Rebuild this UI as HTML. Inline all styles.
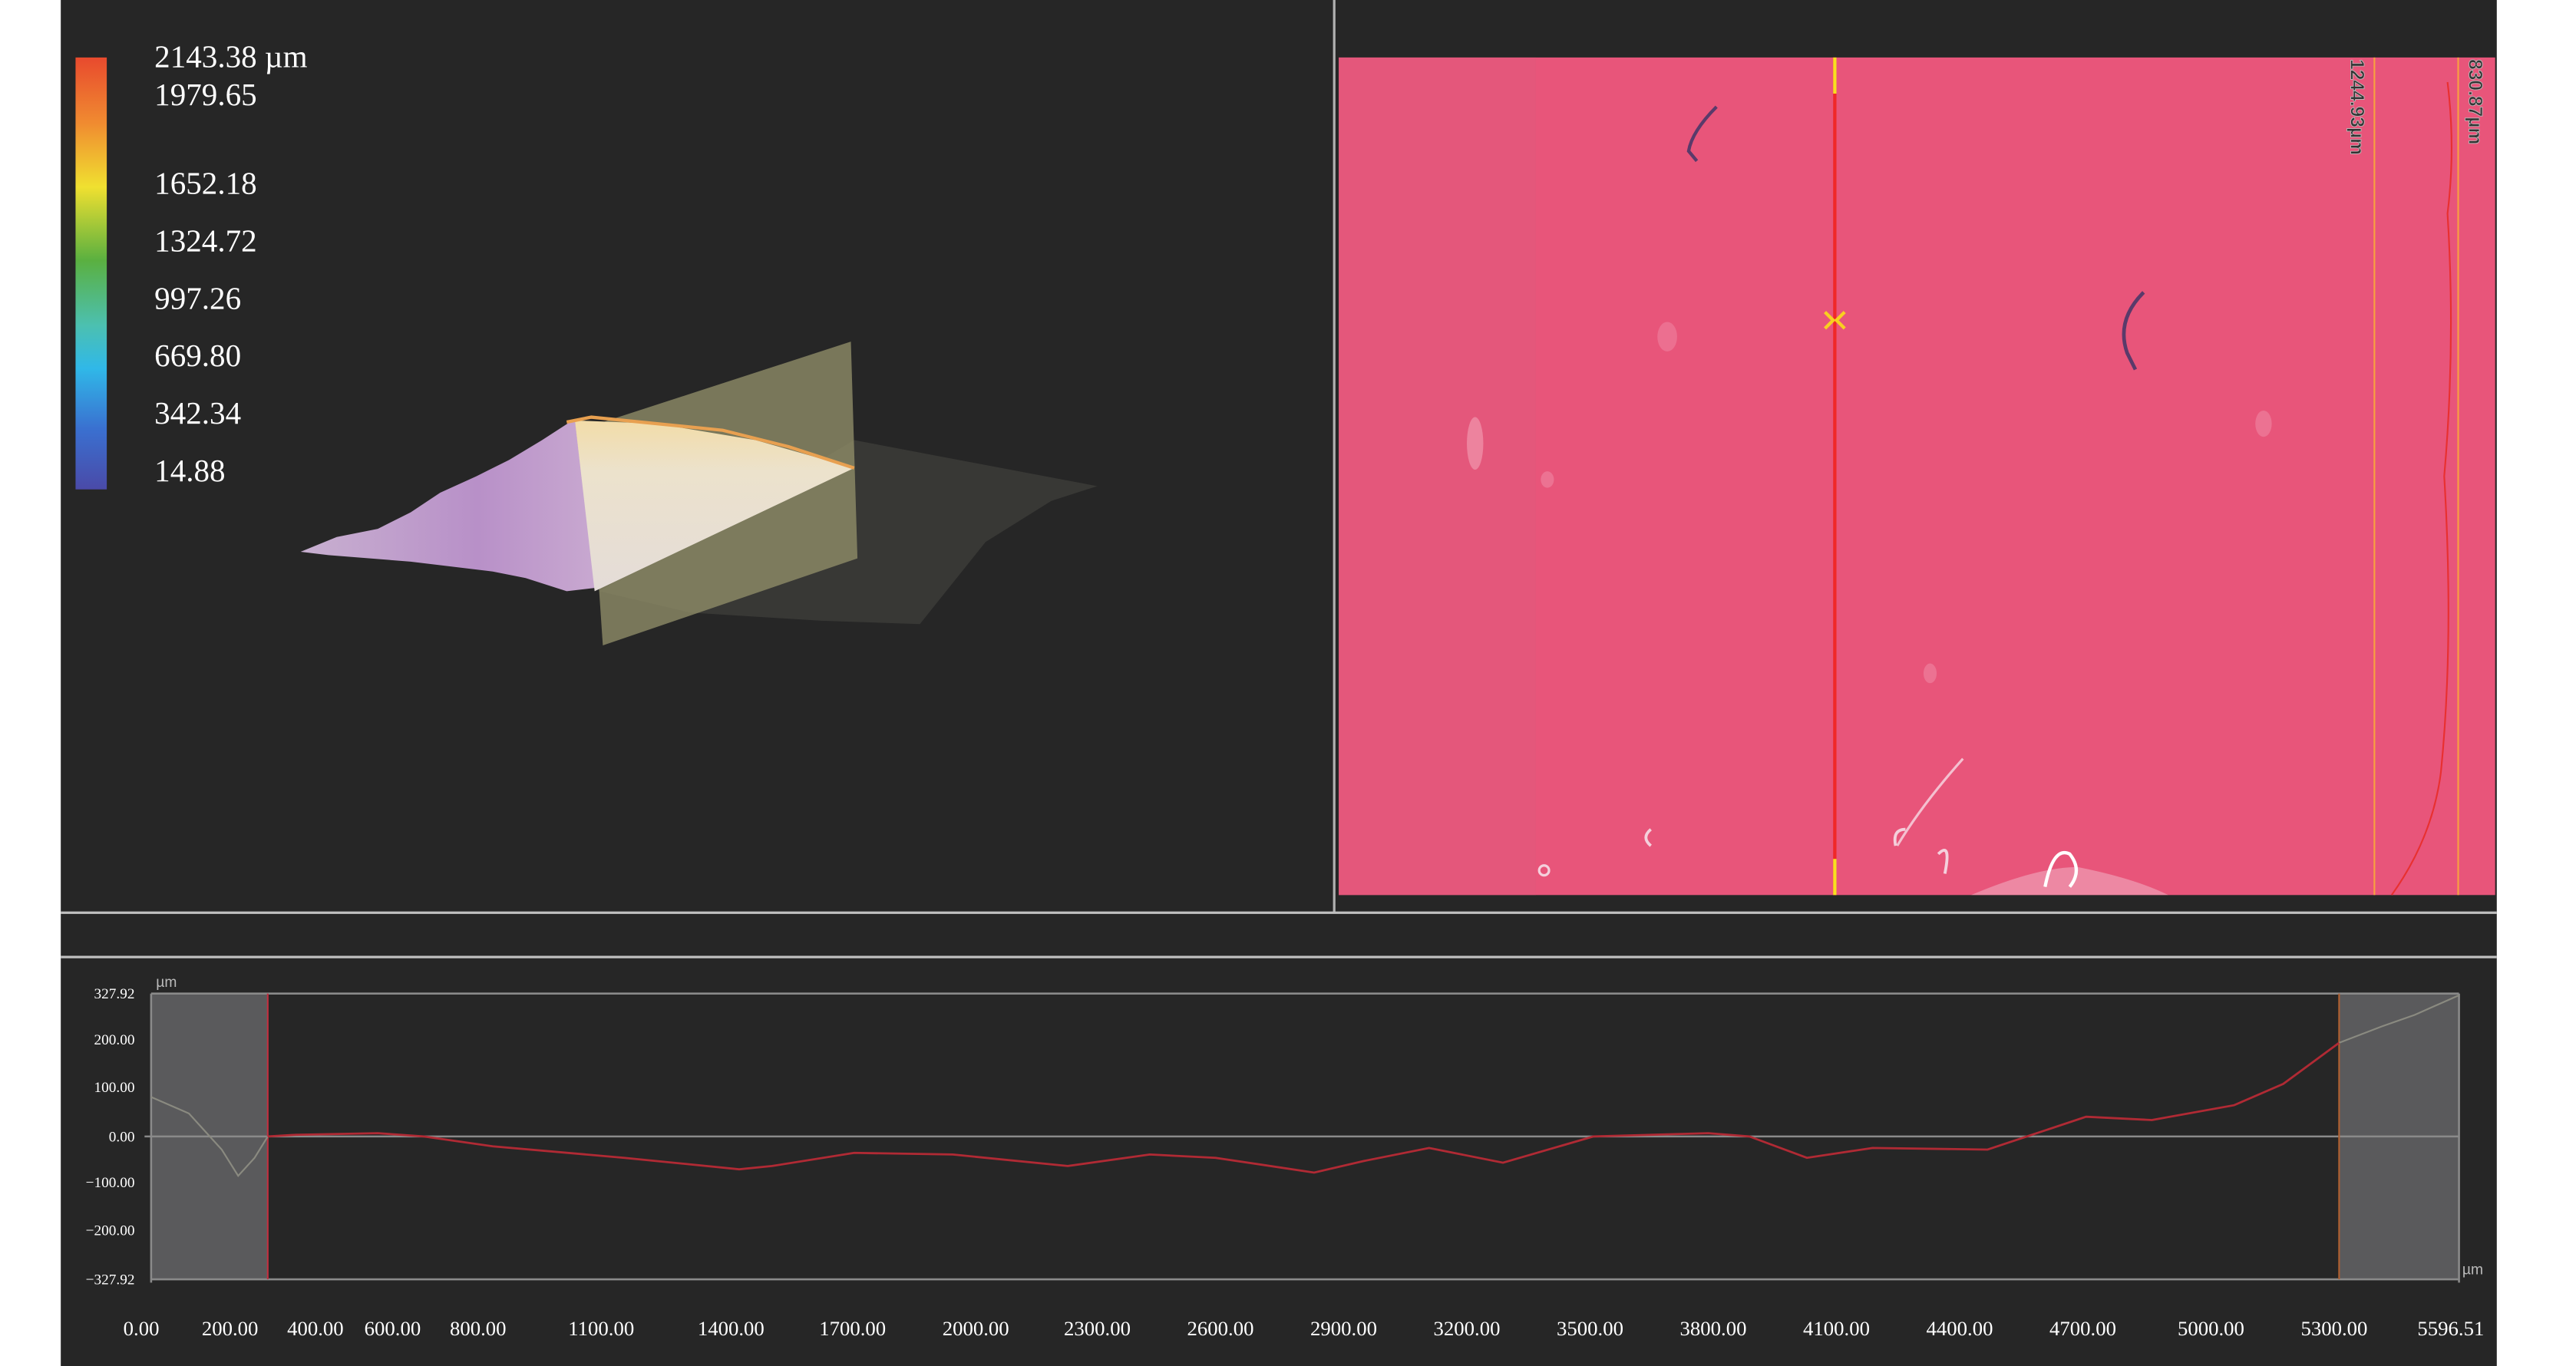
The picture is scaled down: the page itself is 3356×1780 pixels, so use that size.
<!DOCTYPE html>
<html><head><meta charset="utf-8"><style>
html,body{margin:0;padding:0;background:#fff;width:3356px;height:1780px;overflow:hidden}
svg{display:block}
.s{font-family:"Liberation Serif",serif;fill:#fff}
.a{font-family:"Liberation Sans",sans-serif}
</style></head><body>
<svg width="3356" height="1780" viewBox="0 0 3356 1780" xmlns="http://www.w3.org/2000/svg">
<defs>
<linearGradient id="cb" x1="0" y1="0" x2="0" y2="1">
<stop offset="0" stop-color="#e84a2e"/><stop offset="0.15" stop-color="#f08a30"/>
<stop offset="0.3" stop-color="#f0e030"/><stop offset="0.47" stop-color="#5ab040"/>
<stop offset="0.62" stop-color="#4cc0b0"/><stop offset="0.72" stop-color="#30b8e8"/>
<stop offset="0.86" stop-color="#3a70d0"/><stop offset="1" stop-color="#4a4aa8"/>
</linearGradient>
<linearGradient id="pur" x1="0" y1="0" x2="1" y2="0">
<stop offset="0" stop-color="#c8b0d0"/><stop offset="0.6" stop-color="#b890c8"/><stop offset="1" stop-color="#c8a8d0"/>
</linearGradient>
<linearGradient id="cream" x1="0" y1="0" x2="0" y2="1">
<stop offset="0" stop-color="#f2dca8"/><stop offset="0.3" stop-color="#ece2cc"/><stop offset="1" stop-color="#e4dcd8"/>
</linearGradient>
</defs>
<g transform="scale(2.14)">
<rect x="37" y="0" width="1483" height="832" fill="#262626"/>
<rect x="46" y="35" width="19" height="263" fill="url(#cb)"/>
<g class="s" font-size="19.2">
<text x="94" y="41">2143.38 µm</text>
<text x="94" y="64">1979.65</text>
<text x="94" y="118">1652.18</text>
<text x="94" y="153">1324.72</text>
<text x="94" y="188">997.26</text>
<text x="94" y="223">669.80</text>
<text x="94" y="258">342.34</text>
<text x="94" y="293">14.88</text>
</g>
<polygon points="520,268 668,296 640,305 600,330 560,380 500,378 420,373 365,360" fill="#383835"/>
<polygon points="358,260 518,208 522,340 367,393" fill="#8e8c68" opacity="0.8"/>
<polygon points="183,336 205,327 230,322 250,312 268,300 290,290 310,280 330,268 350,255 362,358 345,360 320,352 300,348 250,342 200,338" fill="url(#pur)"/>
<polygon points="350,256 400,258 460,268 520,285 362,360" fill="url(#cream)"/>
<polyline points="345,257 360,254 400,258 440,262 480,272 520,285" fill="none" stroke="#e8a050" stroke-width="2"/>
<rect x="811.5" y="0" width="1.5" height="556" fill="#b0b0b0"/>
<rect x="37" y="555" width="1483" height="1.5" fill="#c0c0c0"/>
<rect x="37" y="582" width="1483" height="1.5" fill="#c0c0c0"/>
<rect x="815" y="35" width="704" height="510" fill="#e8557a"/>
<rect x="815" y="35" width="120" height="510" fill="#e05a7c" opacity="0.5"/>
<ellipse cx="1015" cy="205" rx="6" ry="9" fill="#f08aa6" opacity="0.5"/>
<ellipse cx="898" cy="270" rx="5" ry="16" fill="#f4a0b6" opacity="0.6"/>
<ellipse cx="1378" cy="258" rx="5" ry="8" fill="#f090aa" opacity="0.5"/>
<ellipse cx="1175" cy="410" rx="4" ry="6" fill="#f090aa" opacity="0.5"/>
<ellipse cx="942" cy="292" rx="4" ry="5" fill="#f090aa" opacity="0.5"/>
<path d="M1045,65 Q1030,80 1028,92 L1033,98" fill="none" stroke="#5a3a6a" stroke-width="2"/>
<path d="M1305,178 Q1288,195 1295,215 L1300,225" fill="none" stroke="#5a3a6a" stroke-width="2.2"/>
<path d="M1155,515 Q1170,490 1195,462" fill="none" stroke="#f4c0d0" stroke-width="1.5"/>
<path d="M1160,505 q-8,0 -6,10 M1180,520 q8,-8 4,12 M1005,505 q-6,5 0,10" fill="none" stroke="#f4d0dc" stroke-width="1.8"/>
<path d="M1200,545 Q1240,528 1265,528 Q1300,535 1320,545 Z" fill="#f4c8d4" opacity="0.45"/>
<path d="M1245,540 q5,-25 15,-20 q8,10 0,20" fill="none" stroke="#fff" stroke-width="2"/>
<circle cx="940" cy="530" r="3" fill="none" stroke="#f4d0dc" stroke-width="1.5"/>
<rect x="1116" y="35" width="2" height="510" fill="#f02828"/>
<rect x="1116" y="35" width="2" height="22" fill="#f8e020"/>
<rect x="1116" y="523" width="2" height="22" fill="#f8e020"/>
<path d="M1111,190 l5,5 l-5,5 M1123,190 l-5,5 l5,5" fill="none" stroke="#f8d020" stroke-width="2"/>
<rect x="1445" y="35" width="1" height="510" fill="#f8a040"/>
<rect x="1496" y="35" width="1" height="510" fill="#f8a040"/>
<path d="M1490,50 q5,40 0,80 q5,80 -2,160 q6,100 -2,180 q-5,40 -30,75" fill="none" stroke="#e83030" stroke-width="1"/>
<g class="a" font-size="11.5" font-weight="bold" fill="#333" stroke="#bbb" stroke-width="0.4">
<text transform="translate(1431,36) rotate(90)">1244.93µm</text>
<text transform="translate(1503,36) rotate(90)">830.87µm</text>
</g>
<rect x="92" y="605" width="71" height="174" fill="#5a5a5c"/>
<rect x="1424" y="605" width="73" height="174" fill="#5a5a5c"/>
<g stroke="#8a8a8a" stroke-width="1.2" fill="none">
<line x1="92" y1="605" x2="1497" y2="605"/>
<line x1="92" y1="779" x2="1497" y2="779"/>
<line x1="92" y1="605" x2="92" y2="781"/>
<line x1="1497" y1="605" x2="1497" y2="781"/>
<line x1="88" y1="692" x2="1497" y2="692"/>
</g>
<line x1="163" y1="605" x2="163" y2="779" stroke="#c03040" stroke-width="1"/>
<line x1="1424" y1="605" x2="1424" y2="779" stroke="#b06030" stroke-width="1"/>
<polyline points="92,668 115,678 135,700 145,716 155,705 163,692" fill="none" stroke="#8a8a80" stroke-width="1"/>
<polyline points="1424,635 1450,625 1470,618 1497,606" fill="none" stroke="#8a8a80" stroke-width="1"/>
<polyline points="163,692 180,691 230,690 258,692 300,698 380,705 450,712 470,710 520,702 580,703 650,710 700,703 740,705 800,714 830,707 870,699 915,708 970,692 1040,690 1065,692 1100,705 1140,699 1210,700 1240,690 1270,680 1310,682 1360,673 1390,660 1424,635" fill="none" stroke="#b02a34" stroke-width="1.3"/>
<g class="s" font-size="9" text-anchor="end" fill="#ddd">
<text x="82" y="608">327.92</text><text x="82" y="636">200.00</text><text x="82" y="665">100.00</text>
<text x="82" y="695">0.00</text><text x="82" y="723">−100.00</text><text x="82" y="752">−200.00</text><text x="82" y="782">−327.92</text>
</g>
<text class="a" x="95" y="601" font-size="9" fill="#bbb">µm</text>
<text class="a" x="1499" y="776" font-size="9" fill="#bbb">µm</text>
<g class="s" font-size="12.5" text-anchor="middle">
<text x="86" y="813">0.00</text><text x="140" y="813">200.00</text><text x="192" y="813">400.00</text><text x="239" y="813">600.00</text><text x="291" y="813">800.00</text><text x="366" y="813">1100.00</text><text x="445" y="813">1400.00</text><text x="519" y="813">1700.00</text><text x="594" y="813">2000.00</text><text x="668" y="813">2300.00</text><text x="743" y="813">2600.00</text><text x="818" y="813">2900.00</text><text x="893" y="813">3200.00</text><text x="968" y="813">3500.00</text><text x="1043" y="813">3800.00</text><text x="1118" y="813">4100.00</text><text x="1193" y="813">4400.00</text><text x="1268" y="813">4700.00</text><text x="1346" y="813">5000.00</text><text x="1421" y="813">5300.00</text><text x="1492" y="813">5596.51</text>
</g>
</g>
</svg>
</body></html>
